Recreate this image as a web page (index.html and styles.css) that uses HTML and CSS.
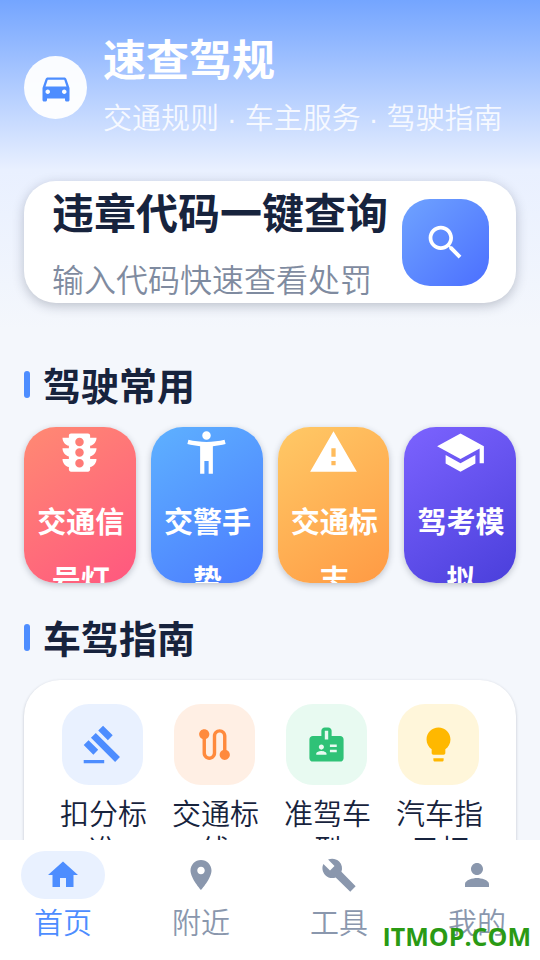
FILE: index.html
```html
<!DOCTYPE html>
<html lang="zh-CN">
<head>
<meta charset="utf-8">
<meta name="viewport" content="width=device-width, initial-scale=1">
<title>速查驾规</title>
<link rel="stylesheet" href="styles.css">
</head>
<body>
<div class="app">
  <main class="content">
    <header class="hero">
      <div class="logo">
        <svg class="icon icon-md" viewBox="0 0 24 24" aria-hidden="true"><path d="M18.92 6.01C18.72 5.42 18.16 5 17.5 5h-11c-.66 0-1.21.42-1.42 1.01L3 12v8c0 .55.45 1 1 1h1c.55 0 1-.45 1-1v-1h12v1c0 .55.45 1 1 1h1c.55 0 1-.45 1-1v-8l-2.08-5.99zM6.5 16c-.83 0-1.5-.67-1.5-1.5S5.67 13 6.5 13s1.5.67 1.5 1.5S7.33 16 6.5 16zm11 0c-.83 0-1.5-.67-1.5-1.5s.67-1.5 1.5-1.5 1.5.67 1.5 1.5-.67 1.5-1.5 1.5zM5 11l1.5-4.5h11L19 11H5z"/></svg>
      </div>
      <div class="hero-text">
        <h1>速查驾规</h1>
        <p>交通规则 · 车主服务 · 驾驶指南</p>
      </div>
    </header>

    <section class="search-card">
      <div class="search-text">
        <h2>违章代码一键查询</h2>
        <p>输入代码快速查看处罚</p>
      </div>
      <button class="search-button" type="button" aria-label="查询">
        <svg class="icon icon-search" viewBox="0 0 24 24" aria-hidden="true"><path d="M15.5 14h-.79l-.28-.27C15.41 12.59 16 11.11 16 9.5 16 5.91 13.09 3 9.5 3S3 5.91 3 9.5 5.91 16 9.5 16c1.61 0 3.09-.59 4.23-1.57l.27.28v.79l5 4.99L20.49 19l-4.99-5zm-6 0C7.01 14 5 11.99 5 9.5S7.01 5 9.5 5 14 7.01 14 9.5 11.99 14 9.5 14z"/></svg>
      </button>
    </section>

    <section>
      <h2 class="section-title">驾驶常用</h2>
      <div class="quick-grid">
        <a class="quick quick-red" href="#signals">
          <svg class="icon icon-lg" viewBox="0 0 24 24" aria-hidden="true"><path d="M20 10h-3V8.86c1.72-.45 3-2 3-3.86h-3V4c0-.55-.45-1-1-1H8c-.55 0-1 .45-1 1v1H4c0 1.86 1.28 3.41 3 3.86V10H4c0 1.86 1.28 3.41 3 3.86V15H4c0 1.86 1.28 3.41 3 3.86V20c0 .55.45 1 1 1h8c.55 0 1-.45 1-1v-1.14c1.72-.45 3-2 3-3.86h-3v-1.14c1.72-.45 3-2 3-3.86zm-8 9c-1.11 0-2-.9-2-2s.89-2 2-2c1.1 0 2 .9 2 2s-.89 2-2 2zm0-5c-1.11 0-2-.9-2-2s.89-2 2-2c1.1 0 2 .9 2 2s-.89 2-2 2zm0-5c-1.11 0-2-.9-2-2 0-1.11.89-2 2-2 1.1 0 2 .89 2 2 0 1.1-.89 2-2 2z"/></svg>
          <span>交通信号灯</span>
        </a>
        <a class="quick quick-blue" href="#gestures">
          <svg class="icon icon-lg" viewBox="0 0 24 24" aria-hidden="true"><path d="M20.5 6c-2.61.7-5.67 1-8.5 1s-5.89-.3-8.5-1L3 8c1.86.5 4 .83 6 1v13h2v-6h2v6h2V9c2-.17 4.14-.5 6-1l-.5-2zM12 6c1.1 0 2-.9 2-2s-.9-2-2-2-2 .9-2 2 .9 2 2 2z"/></svg>
          <span>交警手势</span>
        </a>
        <a class="quick quick-orange" href="#signs">
          <svg class="icon icon-lg" viewBox="0 0 24 24" aria-hidden="true"><path d="M1 21h22L12 2 1 21zm12-3h-2v-2h2v2zm0-4h-2v-4h2v4z"/></svg>
          <span>交通标志</span>
        </a>
        <a class="quick quick-purple" href="#exam">
          <svg class="icon icon-lg" viewBox="0 0 24 24" aria-hidden="true"><path d="M5 13.18v4L12 21l7-3.82v-4L12 17l-7-3.82zM12 3L1 9l11 6 9-4.91V17h2V9L12 3z"/></svg>
          <span>驾考模拟</span>
        </a>
      </div>
    </section>

    <section>
      <h2 class="section-title">车驾指南</h2>
      <div class="guide-card">
        <a class="guide" href="#points">
          <span class="tile tile-blue"><svg class="icon icon-tile" viewBox="0 0 24 24" aria-hidden="true"><path d="M1 21h12v2H1zM5.245 8.07l2.83-2.827 14.14 14.142-2.828 2.828zM12.317 1l5.657 5.656-2.83 2.83-5.654-5.66zM3.825 9.485l5.657 5.657-2.828 2.828-5.657-5.657z"/></svg></span>
          <span class="guide-label">扣分标准</span>
        </a>
        <a class="guide" href="#lines">
          <span class="tile tile-orange"><svg class="icon icon-tile" viewBox="0 0 24 24" aria-hidden="true"><path d="M19 15.18V7c0-2.21-1.79-4-4-4s-4 1.79-4 4v10c0 1.1-.9 2-2 2s-2-.9-2-2V8.82C8.16 8.4 9 7.3 9 6c0-1.66-1.34-3-3-3S3 4.34 3 6c0 1.3.84 2.4 2 2.82V17c0 2.21 1.79 4 4 4s4-1.79 4-4V7c0-1.1.9-2 2-2s2 .9 2 2v8.18c-1.16.41-2 1.51-2 2.82 0 1.66 1.34 3 3 3s3-1.34 3-3c0-1.3-.84-2.4-2-2.82z"/></svg></span>
          <span class="guide-label">交通标线</span>
        </a>
        <a class="guide" href="#license">
          <span class="tile tile-green"><svg class="icon icon-tile" viewBox="0 0 24 24" aria-hidden="true"><path d="M20 7h-5V4c0-1.1-.9-2-2-2h-2c-1.1 0-2 .9-2 2v3H4c-1.1 0-2 .9-2 2v11c0 1.1.9 2 2 2h16c1.1 0 2-.9 2-2V9c0-1.1-.9-2-2-2zM9 12c.83 0 1.5.67 1.5 1.5S9.83 15 9 15s-1.5-.67-1.5-1.5S8.17 12 9 12zm3 6H6v-.75c0-1 2-1.5 3-1.5s3 .5 3 1.5V18zm1-9h-2V4h2v5zm5 7.5h-4V15h4v1.5zm0-3h-4V12h4v1.5z"/></svg></span>
          <span class="guide-label">准驾车型</span>
        </a>
        <a class="guide" href="#indicators">
          <span class="tile tile-yellow"><svg class="icon icon-tile" viewBox="0 0 24 24" aria-hidden="true"><path d="M9 21c0 .55.45 1 1 1h4c.55 0 1-.45 1-1v-1H9v1zm3-19C8.14 2 5 5.14 5 9c0 2.38 1.19 4.47 3 5.74V17c0 .55.45 1 1 1h6c.55 0 1-.45 1-1v-2.26c1.81-1.27 3-3.36 3-5.74 0-3.86-3.14-7-7-7z"/></svg></span>
          <span class="guide-label">汽车指示灯</span>
        </a>
      </div>
    </section>
  </main>

  <nav class="tabs">
    <a class="tab tab-active" href="#home" aria-current="page">
      <span class="tab-pill"><svg class="icon icon-md" viewBox="0 0 24 24" aria-hidden="true"><path d="M10 20v-6h4v6h5v-8h3L12 3 2 12h3v8z"/></svg></span>
      <span>首页</span>
    </a>
    <a class="tab" href="#nearby">
      <span class="tab-pill"><svg class="icon icon-md" viewBox="0 0 24 24" aria-hidden="true"><path d="M12 2C8.13 2 5 5.13 5 9c0 5.25 7 13 7 13s7-7.75 7-13c0-3.87-3.13-7-7-7zm0 9.5c-1.38 0-2.5-1.12-2.5-2.5s1.12-2.5 2.5-2.5 2.5 1.12 2.5 2.5-1.12 2.5-2.5 2.5z"/></svg></span>
      <span>附近</span>
    </a>
    <a class="tab" href="#tools">
      <span class="tab-pill"><svg class="icon icon-md" viewBox="0 0 24 24" aria-hidden="true"><path d="M23.1 19.5l-9.5-9.6c.9-2.3.4-5-1.5-6.9-2-2-5-2.4-7.4-1.3L9 6 6 9 1.6 4.7C.4 7.1.9 10.1 2.9 12.1c1.9 1.9 4.6 2.4 6.9 1.5l9.7 9.5z"/></svg></span>
      <span>工具</span>
    </a>
    <a class="tab" href="#me">
      <span class="tab-pill"><svg class="icon icon-md" viewBox="0 0 24 24" aria-hidden="true"><path d="M12 12c2.21 0 4-1.79 4-4s-1.79-4-4-4-4 1.79-4 4 1.79 4 4 4zm0 2c-2.67 0-8 1.34-8 4v2h16v-2c0-2.66-5.33-4-8-4z"/></svg></span>
      <span>我的</span>
    </a>
    <div class="watermark">ITMOP.COM</div>
  </nav>
</div>
</body>
</html>
```
FILE: styles.css
```css
* {
  box-sizing: border-box;
}

body {
  margin: 0;
  font-family: "Noto Sans CJK SC", sans-serif;
  font-weight: 350;
  color: #17233d;
}

h1,
h2,
p {
  margin: 0;
}

a {
  color: inherit;
  text-decoration: none;
}

.app {
  display: flex;
  flex-direction: column;
  height: 100vh;
  background: #f4f7fc;
}

.content {
  flex: 1;
  min-height: 0;
  overflow: hidden;
  padding: 26px 24px 0;
  background: linear-gradient(#74a5ff 0, #e9f0ff 170px, #f4f7fc 330px);
}

.icon {
  display: block;
  flex: none;
  fill: currentColor;
}

.icon-md {
  width: 36px;
  height: 36px;
}

.icon-search {
  width: 45px;
  height: 45px;
}

.icon-lg {
  width: 51px;
  height: 51px;
}

.icon-tile {
  width: 41px;
  height: 41px;
}

.hero {
  display: flex;
  align-items: center;
  gap: 16px;
  color: #fff;
}

.logo {
  display: grid;
  place-items: center;
  flex: none;
  width: 63px;
  height: 63px;
  border-radius: 50%;
  background: rgba(255, 255, 255, 0.95);
  color: #4d8dff;
}

.hero-text {
  padding-bottom: 6px;
  white-space: nowrap;
}

.hero h1 {
  font-size: 43px;
  font-weight: 700;
  line-height: 62px;
}

.hero p {
  padding-top: 7px;
  font-family: "Liberation Sans", "Noto Sans CJK SC", sans-serif;
  font-size: 29px;
  line-height: 48px;
  opacity: 0.85;
}

.search-card {
  display: flex;
  align-items: center;
  justify-content: space-between;
  height: 122px;
  margin-top: 32px;
  padding: 0 27px 0 28px;
  border-radius: 32px;
  background: #fff;
  box-shadow: 0 3px 12px rgba(30, 40, 60, 0.26);
  white-space: nowrap;
}

.search-text h2 {
  font-size: 42px;
  font-weight: 700;
  line-height: 58px;
}

.search-text p {
  padding-top: 14px;
  font-size: 32px;
  line-height: 48px;
  color: #7f8ba0;
}

.search-button {
  display: grid;
  place-items: center;
  flex: none;
  width: 87px;
  height: 87px;
  padding: 0;
  border: 0;
  border-radius: 28px;
  background: linear-gradient(135deg, #6fa3ff, #4b6fff);
  color: #fff;
}

.section-title {
  display: flex;
  align-items: center;
  gap: 13px;
  padding-top: 53px;
  font-size: 38px;
  font-weight: 700;
  line-height: 56px;
}

.section-title::before {
  content: "";
  width: 6px;
  height: 27px;
  border-radius: 3px;
  background: #4d8dff;
}

.quick-grid {
  display: grid;
  grid-template-columns: repeat(4, 1fr);
  gap: 15px;
  padding-top: 15px;
}

.quick {
  display: flex;
  flex-direction: column;
  align-items: center;
  gap: 13px;
  height: 156px;
  padding: 0 11px;
  overflow: hidden;
  border-radius: 32px;
  box-shadow: 0 2px 6px rgba(30, 40, 60, 0.25);
  color: #fff;
  font-size: 29px;
  font-weight: 700;
  line-height: 58px;
  text-align: center;
}

.quick span {
  padding-left: 2px;
}

.quick-red {
  background: linear-gradient(145deg, #ff8a73, #ff577f);
}

.quick-blue {
  background: linear-gradient(145deg, #5eb1ff, #4b7bff);
}

.quick-orange {
  background: linear-gradient(145deg, #ffc966, #ff9a44);
}

.quick-purple {
  background: linear-gradient(145deg, #7c63ff, #4a3fdb);
}

section + section + section .section-title {
  padding-top: 26px;
}

.guide-card {
  display: grid;
  grid-template-columns: repeat(4, 1fr);
  margin-top: 15px;
  padding: 24px 22px;
  border-radius: 36px;
  background: #fff;
  box-shadow: 0 1px 3px rgba(30, 40, 60, 0.25);
}

.guide {
  display: flex;
  flex-direction: column;
  align-items: center;
  gap: 9px;
  padding: 0 10px;
}

.guide-label {
  padding-left: 3px;
  font-size: 29px;
  line-height: 36px;
  text-align: center;
}

.tile {
  display: grid;
  place-items: center;
  width: 81px;
  height: 81px;
  border-radius: 27px;
}

.tile-blue {
  background: #e9f1ff;
  color: #4d8dff;
}

.tile-orange {
  background: #ffefe4;
  color: #ff8a3d;
}

.tile-green {
  background: #e8faf1;
  color: #2fc277;
}

.tile-yellow {
  background: #fff6da;
  color: #ffb800;
}

.tabs {
  position: relative;
  display: grid;
  grid-template-columns: repeat(4, 1fr);
  column-gap: 12px;
  flex: none;
  height: 120px;
  padding-top: 11px;
  background: #fff;
}

.tab {
  display: flex;
  flex-direction: column;
  align-items: center;
  color: #8a97ad;
  font-size: 29px;
  line-height: 44px;
}

.tab-active {
  color: #4d8dff;
}

.tab-pill {
  display: grid;
  place-items: center;
  width: 84px;
  height: 48px;
  border-radius: 24px;
}

.tab-active .tab-pill {
  background: #e9f1ff;
}

.watermark {
  position: absolute;
  right: 9px;
  bottom: 7px;
  color: #2a9a14;
  font-family: "Open Sans", sans-serif;
  font-size: 25px;
  font-weight: 700;
  line-height: 34px;
}
```
